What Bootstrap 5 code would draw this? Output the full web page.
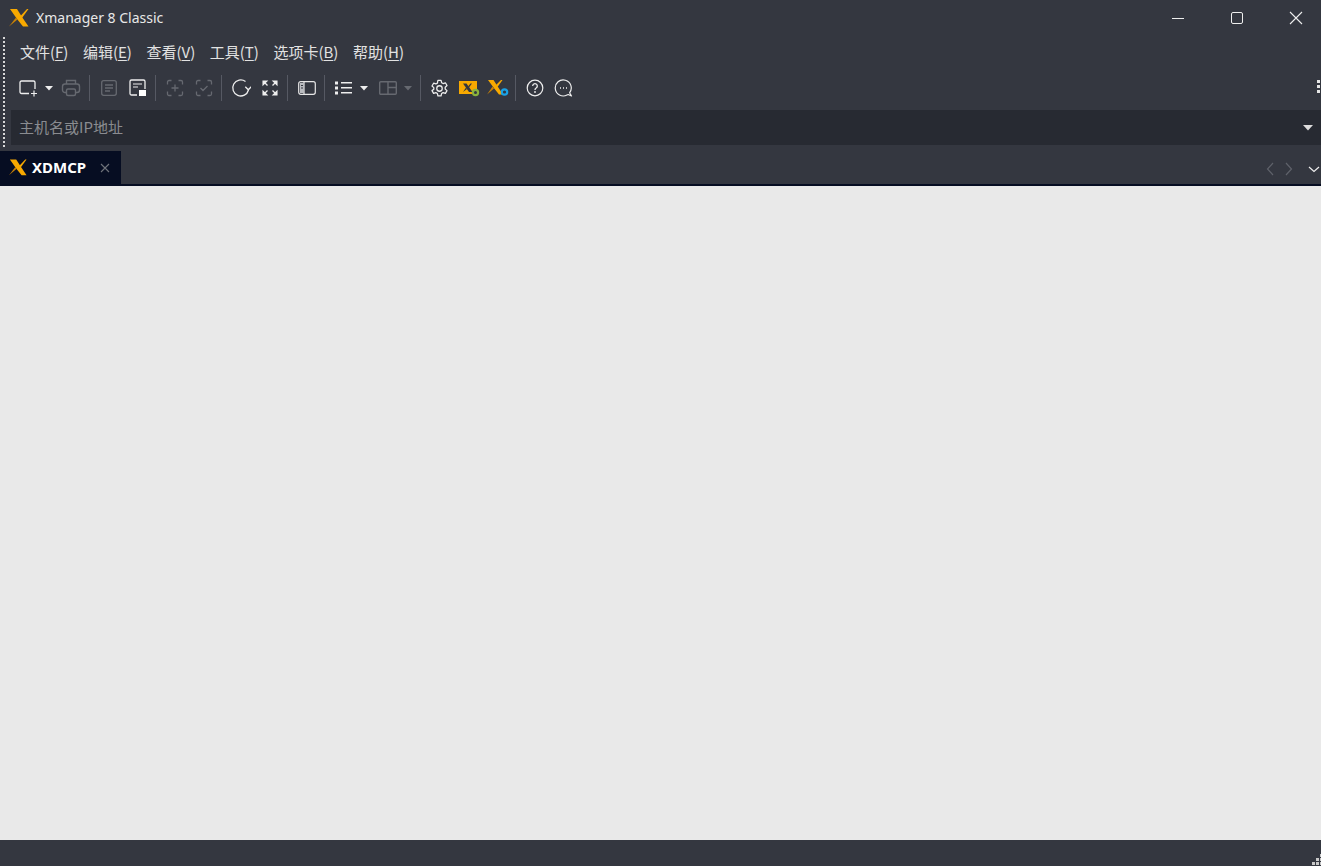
<!DOCTYPE html>
<html lang="zh-CN"><head><meta charset="utf-8"><title>Xmanager 8 Classic</title>
<link rel="stylesheet" href="https://cdn.jsdelivr.net/npm/bootstrap@5.3.0/dist/css/bootstrap.min.css">
<style>
html,body{height:100%;overflow:hidden}
body{background:#343740;color:#e6e6e6;font-family:"Noto Sans","Noto Sans CJK SC",sans-serif;font-size:14px}
.app-win{height:866px}
.title-bar{height:36px;padding-left:9px}
.title-text{margin-left:7px;font-size:14px;color:#e8e8e8;line-height:36px}
.win-group{margin-right:-4px}
.win-btn{width:59px;height:36px}
.grip-zone{position:relative}
.grip-dots{position:absolute;left:3px;top:1px;width:2px;height:110px;background:repeating-linear-gradient(to bottom,#d8d8d8 0 2px,transparent 2px 4px)}
.menu-row{height:34px;padding-left:20px;gap:14.500px}
.menu-entry{font-family:"Noto Sans CJK SC","Noto Sans",sans-serif;font-size:15px;color:#e2e2e2;line-height:31px}
.menu-entry u{text-underline-offset:2px}
.tool-row{height:36px;margin-bottom:4px;padding-left:14px}
.tool-btn{width:29px;height:36px}
.tool-btn svg{display:block}
.tool-first{width:28px}
.tool-print{margin-left:1px;width:28px}
.tool-caret{width:14px;height:36px}
.tool-caret-sm{width:12px;height:36px}
.tool-sep{width:1px;height:26px;background:#565963;margin:0 4px 0 3px}
.tool-sep-a{margin-left:4px}
.tool-sep-c{margin-left:3px}
.tool-sep-b{margin-left:6px}
.tool-gap{margin-left:3px}
.tool-more{position:absolute;right:1px;top:44px;width:3px;height:13px;background:repeating-linear-gradient(to bottom,#e6e6e6 0 3px,transparent 3px 5px)}
.addr-row{height:35px;margin-left:11px;background:#272a32;padding:0 8px 0 8px;color:#8a8c90;font-family:"Noto Sans CJK SC","Noto Sans",sans-serif;font-size:15px}
.tab-row{height:35px;margin-top:6px;border-bottom:2px solid #060d22}
.tab-active{width:121px;height:33px;background:#060d22;padding-left:9px}
.tab-label{margin-left:5px;color:#fff;font-weight:700;font-size:15px}
.tab-close{margin-left:14px}
.tab-nav-btn{width:19px}
.tab-chev{width:14px;margin-left:9px}
.view-area{background:#e9e9e9;height:654px}
.status-row{height:26px;position:relative}
.size-grip{position:absolute;right:0;bottom:1px}
</style></head>
<body>
<div class="app-win d-flex flex-column">
  <div class="title-bar d-flex align-items-center">
    <svg width="20" height="18" viewBox="0 0 20 18"><polygon points="1,0 8,0 13,8 19.500,17.500 14,17.500 8,10" fill="#f8a900"/><polygon points="11.500,7 18,0 19.500,0 13,9" fill="#f8a900"/><polygon points="7,8.500 8.500,10.500 0,17.500" fill="#c98206"/></svg>
    <span class="title-text">Xmanager 8 Classic</span>
    <div class="ms-auto d-flex win-group">
      <div class="win-btn d-flex align-items-center justify-content-center"><svg width="14" height="14" viewBox="0 0 14 14"><path d="M1 7.500h12" stroke="#eee" stroke-width="1"/></svg></div>
      <div class="win-btn d-flex align-items-center justify-content-center"><svg width="14" height="14" viewBox="0 0 14 14"><rect x="1.500" y="1.500" width="11" height="11" rx="1.500" fill="none" stroke="#eee"/></svg></div>
      <div class="win-btn d-flex align-items-center justify-content-center"><svg width="14" height="14" viewBox="0 0 14 14"><path d="M1 1l12 12M13 1L1 13" stroke="#eee" stroke-width="1.100"/></svg></div>
    </div>
  </div>
  <div class="grip-zone">
    <div class="grip-dots"></div>
    <div class="menu-row d-flex">
      <span class="menu-entry">文件(<u>F</u>)</span><span class="menu-entry">编辑(<u>E</u>)</span><span class="menu-entry">查看(<u>V</u>)</span><span class="menu-entry">工具(<u>T</u>)</span><span class="menu-entry">选项卡(<u>B</u>)</span><span class="menu-entry">帮助(<u>H</u>)</span>
    </div>
    <div class="tool-row d-flex align-items-center">
      <div class="tool-btn tool-first d-flex align-items-center justify-content-center"><svg width="22" height="20" viewBox="-1 0 22 20"><path d="M11 15.500H3.500a1.500 1.500 0 0 1-1.500-1.500V4.500A1.500 1.500 0 0 1 3.500 3h12A1.500 1.500 0 0 1 17 4.500V11" fill="none" stroke="#eee" stroke-width="1.300"/><path d="M16 12.500v6M13 15.500h6" stroke="#eee" stroke-width="1.200"/></svg></div>
      <div class="tool-caret d-flex align-items-center justify-content-center"><svg width="8" height="5" viewBox="0 0 8 5"><path d="M0 0h8L4 4.500z" fill="#eee"/></svg></div>
      <div class="tool-btn tool-print d-flex align-items-center justify-content-center"><svg width="20" height="20" viewBox="0 0 20 20" fill="none" stroke="#666970" stroke-width="1.400"><path d="M5.500 6V2.500h9V6"/><rect x="1.500" y="6" width="17" height="8.500" rx="2.500"/><rect x="5.500" y="11" width="9" height="6.500" rx="1.500" fill="#343740"/></svg></div>
      <div class="tool-sep tool-sep-a"></div>
      <div class="tool-btn d-flex align-items-center justify-content-center"><svg width="18" height="18" viewBox="0 0 18 18" fill="none" stroke="#666970" stroke-width="1.300"><rect x="1.700" y="1.700" width="14.600" height="14.600" rx="2"/><path d="M5 6h8M5 9h8M5 12h5"/></svg></div>
      <div class="tool-btn d-flex align-items-center justify-content-center"><svg width="20" height="20" viewBox="0 0 20 20"><path d="M9 17H3.500A1.500 1.500 0 0 1 2 15.500v-12A1.500 1.500 0 0 1 3.500 2h12A1.500 1.500 0 0 1 17 3.500V11" fill="none" stroke="#eee" stroke-width="1.300"/><path d="M5 6h9M5 9h5" stroke="#eee" stroke-width="1.200"/><rect x="11" y="12" width="7" height="6" fill="#fff"/></svg></div>
      <div class="tool-sep"></div>
      <div class="tool-btn d-flex align-items-center justify-content-center"><svg width="18" height="18" viewBox="0 0 18 18" fill="none" stroke="#666970" stroke-width="1.300"><path d="M1.500 5.500V3A1.500 1.500 0 0 1 3 1.500h2.500M12.500 1.500H15A1.500 1.500 0 0 1 16.500 3v2.500M16.500 12.500V15a1.500 1.500 0 0 1-1.500 1.500h-2.500M5.500 16.500H3A1.500 1.500 0 0 1 1.500 15v-2.500M9 5.500v7M5.500 9h7"/></svg></div>
      <div class="tool-btn d-flex align-items-center justify-content-center"><svg width="18" height="18" viewBox="0 0 18 18" fill="none" stroke="#666970" stroke-width="1.300"><path d="M1.500 5.500V3A1.500 1.500 0 0 1 3 1.500h2.500M12.500 1.500H15A1.500 1.500 0 0 1 16.500 3v2.500M16.500 12.500V15a1.500 1.500 0 0 1-1.500 1.500h-2.500M5.500 16.500H3A1.500 1.500 0 0 1 1.500 15v-2.500M5.500 9l2.500 2.500 4.500-4.500"/></svg></div>
      <div class="tool-sep tool-sep-c"></div>
      <div class="tool-btn d-flex align-items-center justify-content-center"><svg width="20" height="20" viewBox="-.5 0 20 20" fill="none" stroke="#eee" stroke-width="1.300"><path d="M17 12A8 8 0 1 1 14 3.500"/><path d="M13.800 8.800l3 3 3-3" stroke-width="1.300"/></svg></div>
      <div class="tool-btn d-flex align-items-center justify-content-center"><svg width="16" height="16" viewBox="0 0 16 16" fill="#eee" stroke="#eee" stroke-width="1.100"><path d="M1 5V1h4zM15 5V1h-4zM1 11v4h4zM15 11v4h-4z"/><path d="M1.500 1.500l4 4M14.500 1.500l-4 4M1.500 14.500l4-4M14.500 14.500l-4-4" stroke-width="1.300"/></svg></div>
      <div class="tool-sep"></div>
      <div class="tool-btn d-flex align-items-center justify-content-center"><svg width="18" height="16" viewBox="0 0 18 16" fill="none" stroke="#e6e6e6" stroke-width="1.200"><rect x=".7" y="1.700" width="16.600" height="12.600" rx="2"/><path d="M6 2v12"/><rect x="2" y="3" width="4" height="10" fill="#b9bbbf" stroke="none"/><path d="M3 5.500h2M3 8h2" stroke="#343740"/></svg></div>
      <div class="tool-sep"></div>
      <div class="tool-btn d-flex align-items-center justify-content-center"><svg width="18" height="14" viewBox="0 0 18 14" fill="#eee"><rect x="0" y="0.500" width="3" height="3"/><rect x="0" y="5.500" width="3" height="3"/><rect x="0" y="10.500" width="3" height="3"/><rect x="6" y="1" width="11" height="1.500"/><rect x="6" y="6" width="11" height="1.500"/><rect x="6" y="11" width="11" height="1.500"/></svg></div>
      <div class="tool-caret-sm d-flex align-items-center justify-content-center"><svg width="8" height="5" viewBox="0 0 8 5"><path d="M0 0h8L4 4.500z" fill="#eee"/></svg></div>
      <div class="tool-btn tool-gap d-flex align-items-center justify-content-center"><svg width="18" height="14" viewBox="0 0 18 14" fill="none" stroke="#666970" stroke-width="1.400"><rect x=".7" y=".7" width="16.600" height="12.600" rx="1"/><path d="M9 1v12M9 6.500h8"/></svg></div>
      <div class="tool-caret-sm d-flex align-items-center justify-content-center"><svg width="8" height="5" viewBox="0 0 8 5"><path d="M0 0h8L4 4.500z" fill="#666970"/></svg></div>
      <div class="tool-sep tool-sep-b"></div>
      <div class="tool-btn d-flex align-items-center justify-content-center"><svg width="19" height="19" viewBox="0 0 18 18" fill="none" stroke="#eee" stroke-width="1.200"><circle cx="9" cy="9" r="2.600"/><path d="M7.500 1.200h3l.5 2.300 1.400.8 2.200-.7 1.500 2.600-1.700 1.600v1.600l1.700 1.600-1.500 2.600-2.200-.7-1.400.8-.5 2.300h-3l-.5-2.300-1.400-.8-2.200.7-1.500-2.600L3.600 9.800V8.200L1.900 6.600l1.500-2.600 2.200.7L7 3.900z" stroke-linejoin="round"/></svg></div>
      <div class="tool-btn d-flex align-items-center justify-content-center"><svg width="22" height="18" viewBox="0 0 22 18"><rect x="1" y="2" width="18" height="13" fill="#f8a900"/><polygon points="5,4.500 8.500,4.500 14.500,13 11,13" fill="#33363f"/><polygon points="10,7.500 12.500,4.500 14,4.500 11,8.500" fill="#33363f"/><polygon points="8,8.500 9,10 5,13" fill="#33363f"/><circle cx="17.500" cy="13.500" r="2.600" fill="#33363f" stroke="#8ab33c" stroke-width="2.200"/></svg></div>
      <div class="tool-btn d-flex align-items-center justify-content-center"><svg width="22" height="18" viewBox="0 0 22 18"><polygon points="1,1 6.500,1 11,8 16,15.500 12,15.500 6.500,8.500" fill="#f8a900"/><polygon points="9,6 14,1 15.500,1 10.500,8" fill="#f8a900"/><polygon points="5.500,7.500 7,9.500 0,15.500" fill="#c98206"/><circle cx="17.500" cy="13" r="2.700" fill="#33363f" stroke="#19a2e6" stroke-width="2.200"/></svg></div>
      <div class="tool-sep"></div>
      <div class="tool-btn d-flex align-items-center justify-content-center"><svg width="18" height="18" viewBox="0 0 18 18" fill="none" stroke="#eee" stroke-width="1.200"><circle cx="9" cy="9" r="7.800"/><path d="M6.700 7a2.300 2.300 0 1 1 3.500 2c-.8.500-1.200 1-1.200 1.900" stroke-width="1.300"/><circle cx="9" cy="13" r=".9" fill="#eee" stroke="none"/></svg></div>
      <div class="tool-btn d-flex align-items-center justify-content-center"><svg width="19" height="18" viewBox="0 0 19 18" fill="none" stroke="#eee" stroke-width="1.200"><path d="M17.500 17l-1.900-3.200A8 8 0 1 0 13 16a8 8 0 0 0 1.200-.5z" stroke-linejoin="round"/><path d="M6 9h1M9 9h1M12 9h1" stroke-width="1.500"/></svg></div>
    </div>
    <div class="tool-more"></div>
    <div class="addr-row d-flex align-items-center justify-content-between"><span>主机名或IP地址</span><svg width="10" height="6" viewBox="0 0 10 6"><path d="M0 0h10L5 5.500z" fill="#ddd"/></svg></div>
  </div>
  <div class="tab-row d-flex">
    <div class="tab-active d-flex align-items-center">
      <svg width="18" height="17" viewBox="0 0 20 18"><polygon points="1,0 8,0 13,8 19.500,17.500 14,17.500 8,10" fill="#f8a900"/><polygon points="11.500,7 18,0 19.500,0 13,9" fill="#f8a900"/><polygon points="7,8.500 8.500,10.500 0,17.500" fill="#c98206"/></svg>
      <span class="tab-label">XDMCP</span>
      <svg class="tab-close" width="10" height="10" viewBox="0 0 10 10"><path d="M1 1l8 8M9 1L1 9" stroke="#6f727a" stroke-width="1.100"/></svg>
    </div>
    <div class="ms-auto d-flex align-items-center">
      <div class="tab-nav-btn text-center"><svg width="8" height="14" viewBox="0 0 8 14"><path d="M7 1L1.500 7 7 13" fill="none" stroke="#5f626a" stroke-width="1.200"/></svg></div>
      <div class="tab-nav-btn text-center"><svg width="8" height="14" viewBox="0 0 8 14"><path d="M1 1l5.500 6L1 13" fill="none" stroke="#5f626a" stroke-width="1.200"/></svg></div>
      <div class="tab-chev text-center"><svg width="12" height="7" viewBox="0 0 12 7"><path d="M1 1l5 4.500L11 1" fill="none" stroke="#eee" stroke-width="1.200"/></svg></div>
    </div>
  </div>
  <div class="view-area"></div>
  <div class="status-row"><svg class="size-grip d-block" width="9" height="11" viewBox="0 0 9 11" fill="#c8c8c8"><rect x="8" y="0" width="1" height="3"/><rect x="4" y="4" width="3" height="3"/><rect x="8" y="4" width="1" height="3"/><rect x="0" y="8" width="3" height="3"/><rect x="4" y="8" width="3" height="3"/><rect x="8" y="8" width="1" height="3"/></svg></div>
</div>
</body></html>
